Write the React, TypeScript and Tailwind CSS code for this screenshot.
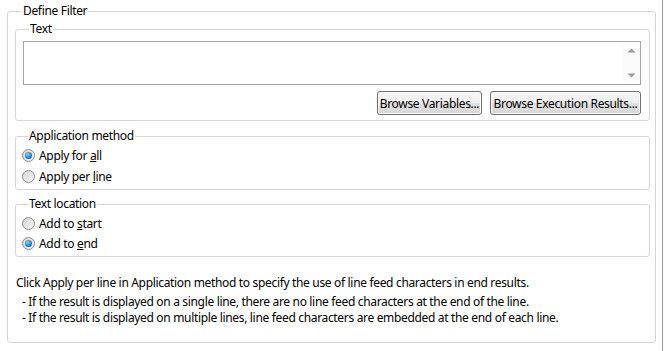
import React from "react";

const font = { fontFamily: '"Segoe UI", "Noto Sans", "Open Sans", sans-serif', letterSpacing: "-0.33px" };

function Radio({ checked, children }: { checked?: boolean; children: React.ReactNode }) {
  return (
    <div className="flex items-center h-[20px]">
      <div className="w-[13px] h-[13px] rounded-full border border-[#8a8a8a] bg-[linear-gradient(135deg,#d4d4d4,#f7f7f7)] flex items-center justify-center">
        {checked && (
          <div className="w-[7px] h-[7px] rounded-full bg-[radial-gradient(circle_at_40%_35%,#8fd3ff_0%,#2b8fd6_45%,#13477a_100%)]" />
        )}
      </div>
      <span className="ml-[4px] text-[12px] leading-[15px] text-black">{children}</span>
    </div>
  );
}

function Button({ children, w }: { children: React.ReactNode; w: string }) {
  return (
    <div
      className={`${w} h-[24px] rounded-[3px] border border-[#707070] bg-[linear-gradient(#f6f6f6_0%,#eeeeee_50%,#e2e2e2_50%,#d6d6d6_100%)] shadow-[inset_0_0_0_1px_#fcfcfc] flex items-center justify-center whitespace-nowrap text-[12px] leading-[15px] text-black`}
    >
      {children}
    </div>
  );
}

export default function App() {
  return (
    <div className="w-[664px] h-[351px] bg-white flex" style={font}>
      <div className="w-[662px] h-[351px] pt-[3px] pl-[7px]">
        <fieldset className="w-[649px] h-[340px] border border-[#d5d5d5] rounded-[3px] pl-[7px] pr-[5px]">
          <legend className="ml-[7px] px-[1px] text-[12px] leading-[16px] text-black">Define Filter</legend>

          <fieldset className="mt-[2px] h-[100px] border border-[#d5d5d5] rounded-[3px] pl-[7px] pr-[8px]">
            <legend className="ml-[6px] px-[1px] text-[12px] leading-[16px] text-black">Text</legend>
            <div className="mt-[4px] h-[44px] border border-[#a5a5a5] bg-white flex justify-end">
              <div className="w-[17px] h-full bg-[#fbfbfb] flex flex-col items-center justify-between py-[6px]">
                <svg width="9" height="5" viewBox="0 0 9 5"><path d="M0.5 4.5 L4.5 0.5 L8.5 4.5 Z" fill="#9a9a9a" /></svg>
                <svg width="9" height="5" viewBox="0 0 9 5"><path d="M0.5 0.5 L4.5 4.5 L8.5 0.5 Z" fill="#9a9a9a" /></svg>
              </div>
            </div>
            <div className="mt-[6px] flex justify-end gap-[8px]">
              <Button w="w-[105px]">Browse Variables...</Button>
              <Button w="w-[151px]">Browse Execution Results...</Button>
            </div>
          </fieldset>

          <fieldset className="mt-[7px] h-[62px] border border-[#d5d5d5] rounded-[3px] pl-[6px]">
            <legend className="ml-[6px] px-[1px] text-[12px] leading-[16px] text-black">Application method</legend>
            <div className="mt-[1px] flex flex-col gap-[1px]">
              <Radio checked>Apply for <u>a</u>ll</Radio>
              <Radio>Apply per <u>l</u>ine</Radio>
            </div>
          </fieldset>

          <fieldset className="mt-[6px] h-[61px] border border-[#d5d5d5] rounded-[3px] pl-[6px]">
            <legend className="ml-[6px] px-[1px] text-[12px] leading-[16px] text-black">Text location</legend>
            <div className="mt-[1px] flex flex-col gap-[0px]">
              <Radio>Add to <u>s</u>tart</Radio>
              <Radio checked>Add to <u>e</u>nd</Radio>
            </div>
          </fieldset>

          <div className="mt-[18px] text-[12px] leading-[16px] text-black">
            <p className="pl-[1px]">Click Apply per line in Application method to specify the use of line feed characters in end results.</p>
            <p className="mt-[3px] pl-[7px]">- If the result is displayed on a single line, there are no line feed characters at the end of the line.</p>
            <p className="pl-[7px]">- If the result is displayed on multiple lines, line feed characters are embedded at the end of each line.</p>
          </div>
        </fieldset>
      </div>
      <div className="w-[1px] h-full bg-[#9a9a9a]" />
      <div className="w-[1px] h-full bg-white" />
    </div>
  );
}
